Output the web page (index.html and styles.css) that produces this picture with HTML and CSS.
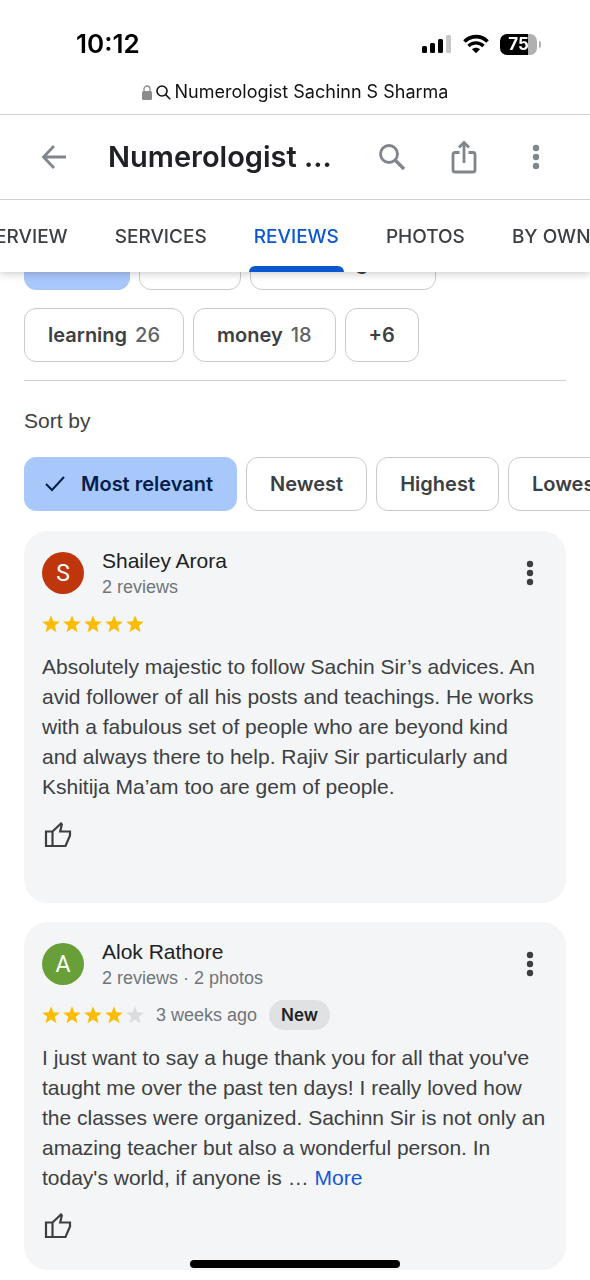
FILE: index.html
```html
<!DOCTYPE html>
<html lang="en">
<head>
<meta charset="utf-8">
<meta name="viewport" content="width=device-width, initial-scale=1">
<title>Numerologist Sachinn S Sharma</title>
<link rel="stylesheet" href="styles.css">
</head>
<body>
<svg class="defs" aria-hidden="true">
  <symbol id="star" viewBox="0 0 18 18"><path d="M9 .3l2.300 6 6.500.4-5 4.100 1.700 6.400L9 13.600l-5.500 3.600 1.700-6.400-5-4.100 6.500-.4z"/></symbol>
  <symbol id="dots" viewBox="0 0 8 26"><circle cx="4" cy="4" r="3.200"/><circle cx="4" cy="13" r="3.200"/><circle cx="4" cy="22" r="3.200"/></symbol>
  <symbol id="check" viewBox="0 0 22 18"><path d="M2 9l6 6L20 2" fill="none" stroke="currentColor" stroke-width="2"/></symbol>
  <symbol id="thumb" viewBox="0 0 28 26"><path d="M2 9.500h6.500V24H2zM8.500 9.500L17 1.500l.8 1-1.600 7h9.800v4L21.500 24h-13" fill="none" stroke="currentColor" stroke-width="2.200"/></symbol>
</svg>
<header class="top">
  <div class="status">
    <span class="clock">10:12</span>
    <span class="signals">
      <svg width="30" height="20" viewBox="0 0 30 20"><rect x="0" y="12" width="5" height="7" rx="1.500"/><rect x="8" y="9" width="5" height="10" rx="1.500"/><rect x="16" y="5" width="5" height="14" rx="1.500"/><rect x="24" y="1" width="5" height="18" rx="1.500" fill="#c8c8c8"/></svg>
      <svg width="26" height="20" viewBox="0 0 26 20"><path d="M1.500 7.500C8 1 18 1 24.500 7.500" fill="none" stroke="#000" stroke-width="3.600"/><path d="M5.500 12c4.300-4.200 10.700-4.200 15 0" fill="none" stroke="#000" stroke-width="3.400"/><path d="M9 15.300c2.300-2 5.700-2 8 0l-4 4z"/></svg>
      <span class="battery"><span class="level">75</span></span>
    </span>
  </div>
  <div class="address">
    <svg width="10" height="15" viewBox="0 0 10 15"><rect y="6" width="10" height="9" rx="1.500" fill="#8b8b8d"/><path d="M2 7V4a3 3 0 0 1 6 0v3" fill="none" stroke="#8b8b8d" stroke-width="1.300"/></svg>
    <svg width="15" height="15" viewBox="0 0 15 15" fill="none" stroke="#111" stroke-width="1.600"><circle cx="6" cy="6" r="5"/><path d="M9.700 9.700l4.600 4.600"/></svg>
    <span>Numerologist Sachinn S Sharma</span>
  </div>
  <div class="bar">
    <button class="icon" aria-label="Back"><svg width="26" height="26" viewBox="0 0 26 26" fill="none" stroke="currentColor" stroke-width="2.800"><path d="M25 13H2.500M13 2L2.500 13 13 24"/></svg></button>
    <h1>Numerologist …</h1>
    <button class="icon" aria-label="Search"><svg width="28" height="28" viewBox="0 0 28 28" fill="none" stroke="currentColor"><circle cx="11" cy="11" r="8.500" stroke-width="2.800"/><path d="M17.500 17.500l8.500 8.500" stroke-width="3.300"/></svg></button>
    <button class="icon" aria-label="Share"><svg width="26" height="34" viewBox="0 0 26 34" fill="none" stroke="currentColor" stroke-width="2.800"><path d="M8.500 12.500H4A2 2 0 0 0 2 14.500V30a2 2 0 0 0 2 2h18a2 2 0 0 0 2-2V14.500a2 2 0 0 0-2-2h-4.500M13 23V2.500M8 7.500l5-5 5 5"/></svg></button>
    <button class="icon" aria-label="More options"><svg width="8" height="26" fill="currentColor"><use href="#dots"/></svg></button>
  </div>
  <nav class="tabs">
    <a href="#overview">OVERVIEW</a>
    <a href="#services">SERVICES</a>
    <a href="#reviews" class="active" aria-current="page">REVIEWS</a>
    <a href="#photos">PHOTOS</a>
    <a href="#owner">BY OWNER</a>
  </nav>
</header>
<main>
  <div class="chips topics">
    <button class="chip selected"><svg width="22" height="18"><use href="#check"/></svg>All</button>
    <button class="chip">name</button>
    <button class="chip">knowledge <span class="count">27</span></button>
    <button class="chip">learning <span class="count">26</span></button>
    <button class="chip">money <span class="count">18</span></button>
    <button class="chip">+6</button>
  </div>
  <section class="sort">
    <h2>Sort by</h2>
    <div class="chips row">
      <button class="chip selected"><svg width="22" height="18"><use href="#check"/></svg>Most relevant</button>
      <button class="chip">Newest</button>
      <button class="chip">Highest</button>
      <button class="chip">Lowest</button>
    </div>
  </section>
  <article class="card roomy">
    <div class="author">
      <span class="avatar red">S</span>
      <div class="who"><h3>Shailey Arora</h3><p>2 reviews</p></div>
      <button class="icon menu" aria-label="Review options"><svg width="8" height="26" fill="currentColor"><use href="#dots"/></svg></button>
    </div>
    <div class="rating">
      <span class="stars" role="img" aria-label="5 out of 5 stars"><svg><use href="#star"/></svg><svg><use href="#star"/></svg><svg><use href="#star"/></svg><svg><use href="#star"/></svg><svg><use href="#star"/></svg></span>
    </div>
    <p class="text">Absolutely majestic to follow Sachin Sir’s advices. An avid follower of all his posts and teachings. He works with a fabulous set of people who are beyond kind and always there to help. Rajiv Sir particularly and Kshitija Ma’am too are gem of people.</p>
    <button class="icon like" aria-label="Like"><svg width="28" height="26"><use href="#thumb"/></svg></button>
  </article>
  <article class="card">
    <div class="author">
      <span class="avatar green">A</span>
      <div class="who"><h3>Alok Rathore</h3><p>2 reviews · 2 photos</p></div>
      <button class="icon menu" aria-label="Review options"><svg width="8" height="26" fill="currentColor"><use href="#dots"/></svg></button>
    </div>
    <div class="rating">
      <span class="stars" role="img" aria-label="4 out of 5 stars"><svg><use href="#star"/></svg><svg><use href="#star"/></svg><svg><use href="#star"/></svg><svg><use href="#star"/></svg><svg class="off"><use href="#star"/></svg></span>
      <span class="when">3 weeks ago</span>
      <span class="badge">New</span>
    </div>
    <p class="text">I just want to say a huge thank you for all that you've taught me over the past ten days! I really loved how the classes were organized. Sachinn Sir is not only an amazing teacher but also a wonderful person. In today's world, if anyone is … <a href="#more">More</a></p>
    <button class="icon like" aria-label="Like"><svg width="28" height="26"><use href="#thumb"/></svg></button>
  </article>
</main>
<div class="home"></div>
</body>
</html>
```
FILE: styles.css
```css
* { box-sizing: border-box; }
body {
  margin: 0;
  background: #fff;
  color: #3c4043;
  font-family: "Liberation Sans", Arial, sans-serif;
  font-size: 21px;
  overflow-x: hidden;
}
h1, h2, h3, p { margin: 0; font-weight: 400; }
button { font: inherit; color: inherit; cursor: pointer; }
.defs { display: none; }
svg { display: block; flex: none; }
.icon {
  display: flex;
  align-items: center;
  justify-content: center;
  padding: 0;
  border: 0;
  background: none;
}

.top {
  position: sticky;
  top: 0;
  z-index: 1;
  background: #fff;
  box-shadow: 0 2px 8px rgba(0, 0, 0, 0.2);
}
.status {
  display: flex;
  align-items: center;
  justify-content: space-between;
  height: 70px;
  padding: 18px 53px 0 76px;
  color: #000;
}
.clock { font: 600 26px/30px Inter, sans-serif; }
.signals { display: flex; align-items: center; gap: 11px; }
.battery {
  position: relative;
  width: 37px;
  height: 21px;
  border-radius: 7px;
  background: linear-gradient(90deg, #000 75%, #b0b0b0 75%);
  color: #fff;
  text-align: center;
}
.battery::after {
  content: "";
  position: absolute;
  right: -4px;
  top: 7px;
  width: 2px;
  height: 7px;
  border-radius: 0 2px 2px 0;
  background: #b0b0b0;
}
.level { display: block; font: 700 17px/21px Inter, sans-serif; }
.address {
  display: flex;
  align-items: center;
  justify-content: center;
  gap: 4px;
  height: 45px;
  border-bottom: 1px solid #d0d0d0;
  font: 400 18px/22px Inter, sans-serif;
  color: #111;
}
.bar {
  display: flex;
  align-items: center;
  height: 85px;
  padding: 0 18px;
  border-bottom: 1px solid #d0d0d0;
  color: #80868b;
}
.bar .icon { width: 72px; height: 72px; flex: none; }
.bar h1 {
  flex: 1;
  padding-left: 18px;
  font: 600 29px/36px Inter, sans-serif;
  color: #202124;
  white-space: nowrap;
}
.tabs {
  display: flex;
  justify-content: center;
  gap: 37px;
  height: 72px;
  padding-right: 8px;
}
.tabs a {
  position: relative;
  flex: none;
  padding: 0 5px;
  font: 500 19px/74px Inter, sans-serif;
  color: #3c4043;
  text-decoration: none;
}
.tabs .active { color: #0b57d0; }
.tabs .active::after {
  content: "";
  position: absolute;
  inset: auto 0 0;
  height: 6px;
  border-radius: 6px 6px 0 0;
  background: #0b57d0;
}

main { padding: 0 24px 10px; }
.chips { display: flex; gap: 18px 9px; }
.topics {
  flex-wrap: wrap;
  margin-top: -36px;
  padding-bottom: 18px;
  border-bottom: 1px solid #d0d0d0;
}
.chip {
  display: flex;
  align-items: center;
  gap: 8px;
  flex: none;
  height: 54px;
  padding: 0 23px;
  border: 1px solid #c8cacc;
  border-radius: 12px;
  background: #fff;
  font: 600 20px/24px Inter, sans-serif;
}
.chip.selected {
  gap: 15px;
  padding: 0 23px 0 19px;
  border-color: #a8c7fa;
  background: #a8c7fa;
  color: #041e49;
}
.count { font-weight: 500; color: #5f6368; }
.sort h2 { padding: 26px 0 22px; font-size: 21px; line-height: 28px; }
.row { margin-right: -24px; overflow: hidden; }

.card {
  margin-top: 19px;
  padding: 16px 18px 31px;
  border-radius: 24px;
  background: #f4f5f7;
}
.card.roomy { margin-top: 20px; padding-bottom: 55px; }
.author { display: flex; align-items: center; gap: 18px; }
.avatar {
  width: 42px;
  height: 42px;
  border-radius: 50%;
  font: 400 23px/44px Roboto, sans-serif;
  text-align: center;
  color: #fff;
}
.red { background: #bf360c; }
.green { background: #689f38; }
.who { flex: 1; }
.who h3 { font-size: 21px; line-height: 28px; color: #202124; }
.who p { font-size: 18px; line-height: 24px; color: #70757a; }
.menu { width: 36px; height: 48px; }
.rating {
  display: flex;
  align-items: center;
  gap: 12px;
  height: 30px;
  margin-top: 10px;
}
.stars { display: flex; gap: 3px; fill: #fbbc04; }
.stars svg { width: 18px; height: 18px; }
.stars .off { fill: #dadce0; }
.when { font-size: 18px; line-height: 24px; color: #70757a; }
.badge {
  padding: 0 12px;
  border-radius: 15px;
  background: #dfe1e3;
  font: 600 17px/30px Inter, sans-serif;
  color: #202124;
}
.text { margin-top: 13px; padding-right: 2px; line-height: 30px; }
.text a { color: #1558d6; text-decoration: none; }
.like { margin: 20px 0 0 2px; }
.home {
  position: fixed;
  z-index: 2;
  bottom: 12px;
  left: 50%;
  width: 210px;
  height: 8px;
  margin-left: -105px;
  border-radius: 4px;
  background: #000;
}
```
